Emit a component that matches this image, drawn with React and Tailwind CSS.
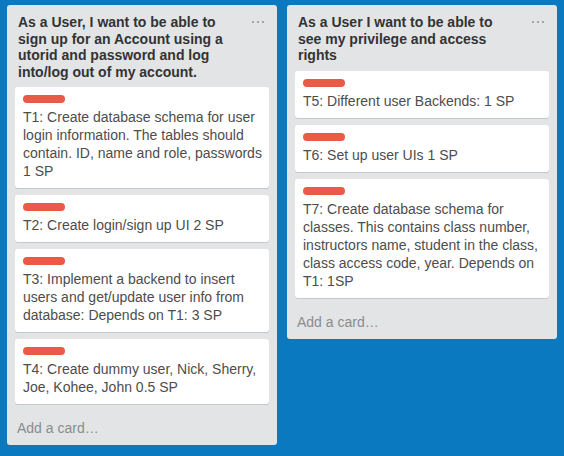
const lists = [
  {
    title: 'As a User, I want to be able to sign up for an Account using a utorid and password and log into/log out of my account.',
    cards: [
      'T1: Create database schema for user login information. The tables should contain. ID, name and role, passwords 1 SP',
      'T2: Create login/sign up UI 2 SP',
      'T3: Implement a backend to insert users and get/update user info from database: Depends on T1: 3 SP',
      'T4: Create dummy user, Nick, Sherry, Joe, Kohee, John 0.5 SP',
    ],
  },
  {
    title: 'As a User I want to be able to see my privilege and access rights',
    cards: [
      'T5: Different user Backends: 1 SP',
      'T6: Set up user UIs 1 SP',
      'T7: Create database schema for classes. This contains class number, instructors name, student in the class, class access code, year. Depends on T1: 1SP',
    ],
  },
];

function Card({ text }) {
  return (
    <div className="mb-[7px] rounded-[3px] bg-white pl-[8px] pr-[6px] pt-[8px] pb-[8px] shadow-[0_1px_0_#c4c9cc]">
      <div className="mb-[5px] h-[8px] w-[42px] rounded-[4px] bg-[#eb5a46]" />
      <p className="text-[14px] leading-[18px] text-[#4d4d4d]">{text}</p>
    </div>
  );
}

function List({ list }) {
  return (
    <div className="w-[270px] shrink-0 rounded-[3px] bg-[#e2e4e6]">
      <div className="relative pl-[11px] pr-[41px] pt-[9px] pb-[7px]">
        <h2 className="text-[14px] font-bold leading-[16.5px] text-[#333333]">{list.title}</h2>
        <svg className="absolute right-[12px] top-[15px]" width="14" height="4" viewBox="0 0 14 4">
          <circle cx="2" cy="2" r="1.1" fill="#999" />
          <circle cx="7" cy="2" r="1.1" fill="#999" />
          <circle cx="12" cy="2" r="1.1" fill="#999" />
        </svg>
      </div>
      <div className="px-[8px]">
        {list.cards.map((c, i) => (
          <Card key={i} text={c} />
        ))}
      </div>
      <div className="px-[10px] pt-[8px] pb-[8px] text-[14px] leading-[18px] text-[#8c8c8c]">Add a card…</div>
    </div>
  );
}

export default function App() {
  return (
    <div
      className="flex h-[456px] w-[564px] items-start gap-[10px] overflow-hidden bg-[#0b79bf] pl-[7px] pt-[5px]"
      style={{ fontFamily: '"Liberation Sans", Arial, sans-serif' }}
    >
      {lists.map((l, i) => (
        <List key={i} list={l} />
      ))}
    </div>
  );
}
